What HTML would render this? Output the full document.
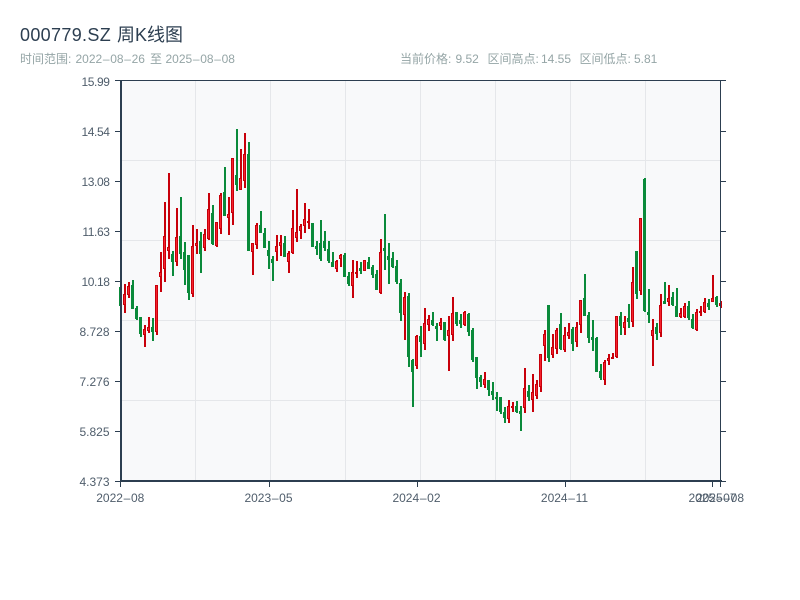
<!DOCTYPE html>
<html lang="zh">
<head>
<meta charset="utf-8">
<title>000779.SZ 周K线图</title>
<style>
html,body{margin:0;padding:0;background:#fff;width:800px;height:600px;overflow:hidden}
svg{display:block;position:absolute;left:0;top:0}
text{font-family:"Liberation Sans","WenQuanYi Zen Hei","Noto Sans CJK SC",sans-serif}
</style>
</head>
<body>
<svg id="s" width="800" height="600" viewBox="0 0 800 600" xmlns="http://www.w3.org/2000/svg">
<rect x="120" y="80" width="600" height="400" fill="#f8f9fa"/>
<g fill="#e5e7ea">
<rect x="195" y="80" width="1" height="400"/><rect x="270" y="80" width="1" height="400"/><rect x="345" y="80" width="1" height="400"/><rect x="420" y="80" width="1" height="400"/><rect x="495" y="80" width="1" height="400"/><rect x="570" y="80" width="1" height="400"/><rect x="645" y="80" width="1" height="400"/>
<rect x="120" y="160" width="600" height="1"/><rect x="120" y="240" width="600" height="1"/><rect x="120" y="320" width="600" height="1"/><rect x="120" y="400" width="600" height="1"/>
</g>
<g id="c"></g>
<g fill="#2c3e50">
<rect x="120" y="80" width="2" height="402"/>
<rect x="120" y="480" width="602" height="2"/>
<rect x="120" y="80" width="606" height="1"/>
<rect x="720" y="80" width="1" height="402"/>
<rect x="115" y="80" width="5" height="1"/><rect x="115" y="131" width="5" height="1"/><rect x="115" y="181" width="5" height="1"/><rect x="115" y="231" width="5" height="1"/><rect x="115" y="281" width="5" height="1"/><rect x="115" y="331" width="5" height="1"/><rect x="115" y="381" width="5" height="1"/><rect x="115" y="431" width="5" height="1"/><rect x="115" y="481" width="5" height="1"/>
<rect x="721" y="80" width="5" height="1"/><rect x="721" y="131" width="5" height="1"/><rect x="721" y="181" width="5" height="1"/><rect x="721" y="231" width="5" height="1"/><rect x="721" y="281" width="5" height="1"/><rect x="721" y="331" width="5" height="1"/><rect x="721" y="381" width="5" height="1"/><rect x="721" y="431" width="5" height="1"/><rect x="721" y="481" width="5" height="1"/>
<rect x="120" y="482" width="1" height="5"/><rect x="269" y="482" width="1" height="5"/><rect x="417" y="482" width="1" height="5"/><rect x="565" y="482" width="1" height="5"/><rect x="712" y="482" width="1" height="5"/><rect x="720" y="482" width="1" height="5"/>
</g>
<text x="20" y="41" font-size="18" fill="#2c3e50" letter-spacing="0.33">000779.SZ</text>
<text x="117" y="41" font-size="18" fill="#2c3e50">周K线图</text>
<g font-size="12" fill="#95a5a6">
<text x="20" y="63">时间范围:</text>
<text x="75.5" y="63">2022<tspan dx=".67">–</tspan><tspan dx=".67">08</tspan><tspan dx=".67">–</tspan><tspan dx=".67">26</tspan></text>
<text x="150" y="63">至</text>
<text x="165.5" y="63">2025<tspan dx=".67">–</tspan><tspan dx=".67">08</tspan><tspan dx=".67">–</tspan><tspan dx=".67">08</tspan></text>
<text x="400" y="63">当前价格:</text><text x="455.5" y="63">9.52</text>
<text x="487.5" y="63">区间高点:</text><text x="541" y="63">14.55</text>
<text x="579.5" y="63">区间低点:</text><text x="634" y="63">5.81</text>
</g>
<g font-size="12" fill="#4f5d6b" text-anchor="end">
<text x="109.5" y="86" letter-spacing="-0.4">15.99</text><text x="109.5" y="136" letter-spacing="-0.4">14.54</text><text x="109.5" y="186" letter-spacing="-0.4">13.08</text><text x="109.5" y="236" letter-spacing="-0.4">11.63</text><text x="109.5" y="286" letter-spacing="-0.4">10.18</text><text x="109.5" y="336">8.728</text><text x="109.5" y="386">7.276</text><text x="109.5" y="436">5.825</text><text x="109.5" y="486">4.373</text>
</g>
<g font-size="12" fill="#4f5d6b" text-anchor="middle">
<text x="120.3" y="502">2022<tspan dx=".67">–</tspan><tspan dx=".67">08</tspan></text>
<text x="268.5" y="502">2023<tspan dx=".67">–</tspan><tspan dx=".67">05</tspan></text>
<text x="416.5" y="502">2024<tspan dx=".67">–</tspan><tspan dx=".67">02</tspan></text>
<text x="564.5" y="502">2024<tspan dx=".67">–</tspan><tspan dx=".67">11</tspan></text>
<text x="712.5" y="502">2025<tspan dx=".67">–</tspan><tspan dx=".67">07</tspan></text>
<text x="720" y="502">2025<tspan dx=".67">–</tspan><tspan dx=".67">08</tspan></text>
</g>
</svg>
<script>
var d="g287,306,287,306;r284,313,294,305;r282,298,286,295;g280,309,285,309;g306,320,308,319;g317,337,317,334;r325,347,329,335;r317,333,327,331;g318,341,327,332;r285,335,285,332;r252,292,272,277;r202,282,236,269;r173,259,247,251;g251,276,254,262;r208,266,237,262;g197,259,236,254;g242,285,252,270;g255,300,255,293;r225,297,246,294;r229,254,243,246;g232,273,241,254;r229,251,234,248;r193,240,209,239;g205,245,213,244;r222,247,222,246;r193,234,195,229;g167,216,192,216;r197,235,214,218;r158,225,158,213;g129,191,175,185;r149,190,178,190;r133,188,154,181;g142,251,154,251;r243,275,243,252;r223,249,225,245;g211,233,225,233;g228,248,233,248;g241,269,250,256;g256,281,259,263;r235,261,246,252;r235,256,242,246;g236,257,243,257;r251,273,253,262;r210,254,228,253;r189,242,232,238;r224,239,226,231;r203,233,219,226;r209,229,221,223;g223,247,223,247;g241,255,246,249;g220,261,243,259;g231,251,241,248;g241,263,249,261;g252,267,262,267;r260,272,261,269;r254,267,255,259;g253,277,255,277;g272,286,276,284;r260,298,272,286;r261,278,272,274;g262,274,268,271;r260,271,260,271;g257,269,262,269;g265,278,267,275;g270,290,274,290;r239,294,252,293;g214,270,248,251;g243,284,256,260;g252,268,258,267;g260,284,266,282;g279,321,283,313;r292,340,297,315;g293,367,296,357;g359,407,360,372;r335,369,336,366;g326,357,336,342;r308,350,323,344;r315,331,319,325;g312,326,320,325;g323,341,326,329;r318,330,322,326;g322,341,322,340;r316,371,330,336;r297,341,313,335;g312,326,312,324;g314,328,320,324;r311,326,312,325;g313,336,314,332;g328,362,330,360;g357,389,357,378;g375,387,377,382;r372,388,379,385;g380,396,380,390;g382,400,391,395;g392,411,397,399;g397,414,397,412;g407,423,412,418;r400,423,406,419;r402,412,406,408;g401,413,406,412;g406,431,411,414;r368,413,388,408;g385,401,391,397;r374,412,392,400;r380,399,384,396;r354,392,354,387;r330,361,334,346;g305,362,305,358;r334,358,347,355;r328,354,330,349;g313,350,324,349;r327,352,335,350;r323,339,332,336;g327,351,329,344;r322,347,327,342;r300,333,300,325;g274,316,298,316;g312,343,315,338;g320,351,337,340;g337,372,338,372;g364,380,371,378;r360,385,362,380;r354,365,358,361;r353,359,357,359;r316,358,316,357;g312,335,316,326;r316,335,322,328;g304,328,318,322;r267,327,282,322;g251,299,251,294;r218,295,218,291;g178,312,179,311;g289,323,312,315;r319,366,330,336;g323,340,327,334;r294,337,305,333;g282,304,301,304;r285,306,298,302;g292,306,297,305;g288,317,306,317;r308,318,313,317;r303,318,306,317;g301,320,306,318;g314,329,319,328;r309,331,312,330;r306,316,311,313;r298,313,302,312;g299,310,303,307;r275,302,298,302;g296,307,297,305;r301,308,303,306".split(";");
var h="";
d.forEach(function(s,i){
 var up=s[0]=="r",a=s.slice(1).split(",").map(Number),x=119+4*i,col=up?"#c8000a":"#0a8a3a",t=a[2],b=a[3];
 h+='<rect x="'+(x+1)+'" y="'+a[0]+'" width="2" height="'+(a[1]-a[0])+'" fill="'+col+'"/>';
 h+='<rect x="'+x+'" y="'+t+'" width="3" height="'+Math.max(b-t,1)+'" fill="'+col+'"/>';
 if(up&&b-t>2)h+='<rect x="'+(x+1)+'" y="'+(t+1)+'" width="1" height="'+(b-t-2)+'" fill="#f5222d"/>';
});
document.getElementById("c").innerHTML=h;
</script>
</body>
</html>
